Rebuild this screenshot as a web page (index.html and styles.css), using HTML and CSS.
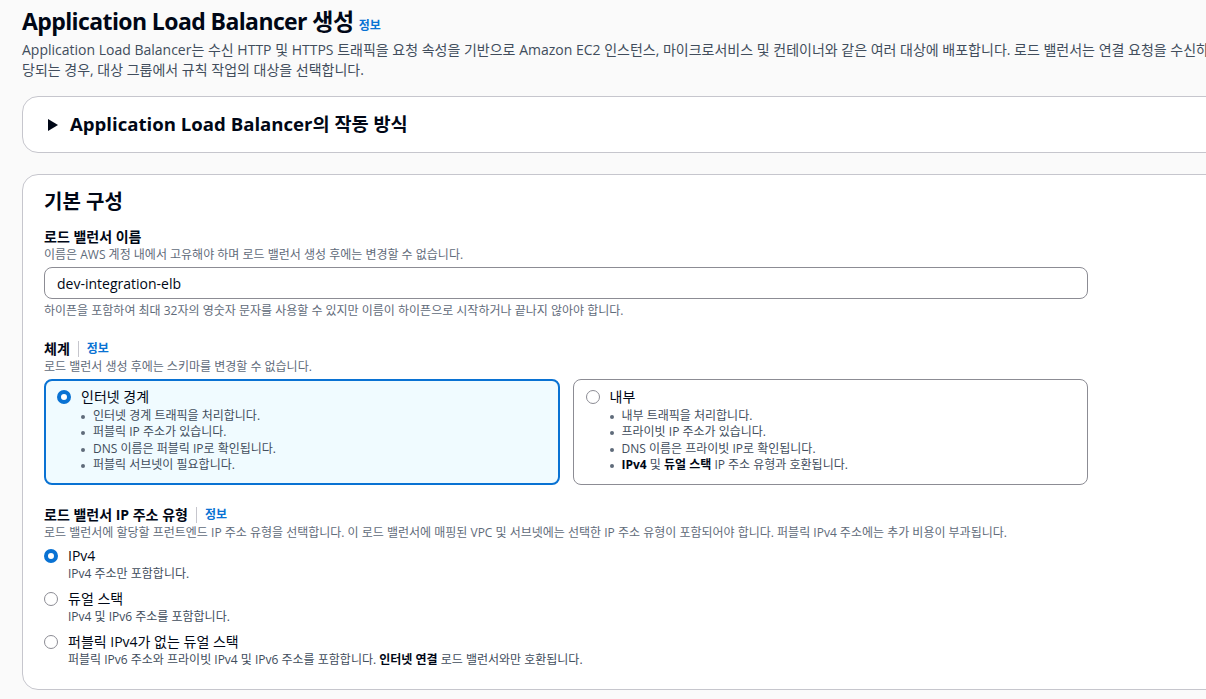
FILE: index.html
```html
<!DOCTYPE html>
<html lang="ko">
<head>
<meta charset="utf-8">
<title>Application Load Balancer 생성</title>
<link rel="stylesheet" href="styles.css">
</head>
<body>
<div class="page">
  <header class="page-header">
    <h1 class="page-title">Application Load Balancer 생성 <a class="info-link">정보</a></h1>
    <p class="page-lead">Application Load Balancer는 수신 HTTP 및 HTTPS 트래픽을 요청 속성을 기반으로 Amazon EC2 인스턴스, 마이크로서비스 및 컨테이너와 같은 여러 대상에 배포합니다. 로드 밸런서는 연결 요청을 수신하면 우선 순위에 따라 리스너 규칙을 평가하여 적용할 규칙을 결정하고, 해<br>당되는 경우, 대상 그룹에서 규칙 작업의 대상을 선택합니다.</p>
  </header>

  <section class="expander">
    <svg class="caret" width="10" height="12" viewBox="0 0 10 12"><polygon points="0,0 10,6 0,12" fill="#000716"/></svg>
    <h2 class="expander-title">Application Load Balancer의 작동 방식</h2>
  </section>

  <section class="panel">
    <h2 class="panel-title">기본 구성</h2>

    <div class="field">
      <div class="field-label">로드 밸런서 이름</div>
      <div class="field-desc">이름은 AWS 계정 내에서 고유해야 하며 로드 밸런서 생성 후에는 변경할 수 없습니다.</div>
      <input class="text-input" type="text" value="dev-integration-elb">
      <div class="field-hint">하이픈을 포함하여 최대 32자의 영숫자 문자를 사용할 수 있지만 이름이 하이픈으로 시작하거나 끝나지 않아야 합니다.</div>
    </div>

    <div class="field">
      <div class="field-label">체계 <span class="sep"></span> <a class="info-link">정보</a></div>
      <div class="field-desc">로드 밸런서 생성 후에는 스키마를 변경할 수 없습니다.</div>
      <div class="tiles">
        <div class="tile tile-selected">
          <div class="radio-row">
            <span class="radio radio-on"></span>
            <span class="radio-label">인터넷 경계</span>
          </div>
          <ul class="tile-list">
            <li>인터넷 경계 트래픽을 처리합니다.</li>
            <li>퍼블릭 IP 주소가 있습니다.</li>
            <li>DNS 이름은 퍼블릭 IP로 확인됩니다.</li>
            <li>퍼블릭 서브넷이 필요합니다.</li>
          </ul>
        </div>
        <div class="tile">
          <div class="radio-row">
            <span class="radio"></span>
            <span class="radio-label">내부</span>
          </div>
          <ul class="tile-list">
            <li>내부 트래픽을 처리합니다.</li>
            <li>프라이빗 IP 주소가 있습니다.</li>
            <li>DNS 이름은 프라이빗 IP로 확인됩니다.</li>
            <li><b>IPv4</b> 및 <b>듀얼 스택</b> IP 주소 유형과 호환됩니다.</li>
          </ul>
        </div>
      </div>
    </div>

    <div class="field">
      <div class="field-label">로드 밸런서 IP 주소 유형 <span class="sep"></span> <a class="info-link">정보</a></div>
      <div class="field-desc">로드 밸런서에 할당할 프런트엔드 IP 주소 유형을 선택합니다. 이 로드 밸런서에 매핑된 VPC 및 서브넷에는 선택한 IP 주소 유형이 포함되어야 합니다. 퍼블릭 IPv4 주소에는 추가 비용이 부과됩니다.</div>
      <div class="radio-group">
        <div class="option">
          <div class="radio-row">
            <span class="radio radio-on"></span>
            <span class="radio-label">IPv4</span>
          </div>
          <div class="option-desc">IPv4 주소만 포함합니다.</div>
        </div>
        <div class="option">
          <div class="radio-row">
            <span class="radio"></span>
            <span class="radio-label">듀얼 스택</span>
          </div>
          <div class="option-desc">IPv4 및 IPv6 주소를 포함합니다.</div>
        </div>
        <div class="option">
          <div class="radio-row">
            <span class="radio"></span>
            <span class="radio-label">퍼블릭 IPv4가 없는 듀얼 스택</span>
          </div>
          <div class="option-desc">퍼블릭 IPv6 주소와 프라이빗 IPv4 및 IPv6 주소를 포함합니다. <b>인터넷 연결</b> 로드 밸런서와만 호환됩니다.</div>
        </div>
      </div>
    </div>
  </section>
</div>
</body>
</html>
```

FILE: styles.css
```css
html, body {
  margin: 0;
  padding: 0;
  background: #fafafa;
  overflow: hidden;
}

body {
  font-family: "Open Sans", "Noto Sans CJK KR", sans-serif;
  color: #000716;
  font-size: 14px;
  line-height: 20px;
}

.page {
  width: 1240px;
  padding: 6px 0 0 22px;
}

.page-title {
  margin: 0;
  font-size: 23px;
  letter-spacing: -0.6px;
  line-height: 30px;
  font-weight: 700;
  color: #000716;
}

.info-link {
  font-size: 12px;
  letter-spacing: 0;
  font-weight: 700;
  color: #0972d3;
  vertical-align: baseline;
  line-height: 16px;
}

.page-lead {
  margin: 4px 0 0;
  font-size: 14px;
  line-height: 20px;
  color: #414d5c;
  white-space: nowrap;
}

.expander {
  margin-top: 16px;
  height: 57px;
  box-sizing: border-box;
  border: 1px solid #c6c6cd;
  border-radius: 16px;
  background: #ffffff;
  display: flex;
  align-items: center;
  padding-left: 25px;
}

.caret {
  flex: none;
  margin-right: 12px;
}

.expander-title {
  margin: 0 0 2px;
  font-size: 18.6px;
  line-height: 22px;
  font-weight: 700;
}

.panel {
  margin-top: 21px;
  background: #ffffff;
  border: 1px solid #c6c6cd;
  border-radius: 16px;
  padding: 15px 21px 21px;
}

.panel-title {
  margin: 0;
  font-size: 20px;
  line-height: 24px;
  font-weight: 700;
}

.field {
  margin-top: 20px;
  max-width: 1044px;
}

.panel-title + .field {
  margin-top: 13px;
}

.field-label {
  font-size: 14px;
  line-height: 20px;
  font-weight: 700;
  display: flex;
  align-items: center;
  gap: 8px;
}

.sep {
  display: inline-block;
  width: 1px;
  height: 16px;
  background: #c6c6cd;
}

.field-desc,
.field-hint,
.option-desc {
  font-size: 12px;
  line-height: 16px;
  color: #5f6b7a;
}

.text-input {
  display: block;
  box-sizing: border-box;
  width: 100%;
  height: 32px;
  margin-top: 4px;
  padding: 0 12px;
  border: 1px solid #8c8c94;
  border-radius: 8px;
  font-family: inherit;
  font-size: 14px;
  color: #000716;
  background: #ffffff;
}

.field-hint {
  margin-top: 4px;
}

.tiles {
  margin-top: 4px;
  display: grid;
  grid-template-columns: 1fr 1fr;
  gap: 13px;
}

.tile {
  box-sizing: border-box;
  border: 1px solid #8c8c94;
  border-radius: 8px;
  padding: 7px 12px 10px 12px;
  background: #ffffff;
}

.tile-selected {
  border: 2px solid #0972d3;
  background: #f0fbff;
  padding: 6px 11px 9px 11px;
}

.radio-row {
  display: flex;
  align-items: center;
  gap: 10px;
}

.radio {
  flex: none;
  box-sizing: border-box;
  width: 14px;
  height: 14px;
  border-radius: 50%;
  border: 1px solid #8c8c94;
  background: #ffffff;
}

.radio-on {
  border: 4px solid #0972d3;
}

.radio-label {
  font-size: 14px;
  line-height: 20px;
  color: #000716;
}

.tile-list {
  margin: 1px 0 0;
  padding: 0 0 0 36px;
  list-style: none;
  font-size: 12px;
  line-height: 16.4px;
  color: #414d5c;
}

.tile-list li {
  position: relative;
}

.tile-list li::before {
  content: "";
  position: absolute;
  left: -12px;
  top: 7px;
  width: 4px;
  height: 4px;
  border-radius: 50%;
  background: #5f6b7a;
}

.tile-list b,
.option-desc b {
  color: #000716;
}

.radio-group {
  margin-top: 5px;
  display: flex;
  flex-direction: column;
  gap: 7px;
}

.option-desc {
  padding-left: 24px;
  color: #414d5c;
}
```
